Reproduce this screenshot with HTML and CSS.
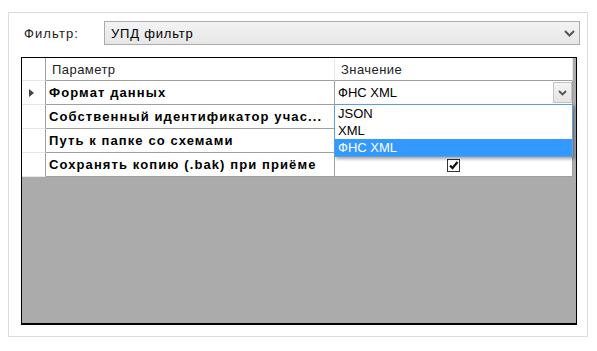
FILE: index.html
```html
<!DOCTYPE html>
<html lang="ru">
<head>
  <meta charset="UTF-8">
  <title>Фильтр</title>
  <link rel="stylesheet" href="styles.css">
</head>
<body>
  <div class="panel">
    <div class="filter-row">
      <label class="filter-label">Фильтр:</label>
      <div class="combo">
        <span>УПД фильтр</span>
        <svg class="chevron" width="11" height="7" viewBox="0 0 11 7"><path d="M1 1 L5.5 5.5 L10 1" fill="none" stroke="#555" stroke-width="2"/></svg>
      </div>
    </div>

    <div class="grid">
      <div class="table">
        <div class="rh hdr"></div>
        <div class="cell hdr">Параметр</div>
        <div class="cell hdr">Значение</div>

        <div class="rh"><span class="arrow"></span></div>
        <div class="cell name">Формат данных</div>
        <div class="cell value">
          <span class="short">ФНС XML</span>
          <div class="drop-btn">
            <svg width="9" height="6" viewBox="0 0 9 6"><path d="M1 1 L4.5 4.5 L8 1" fill="none" stroke="#555" stroke-width="1.8"/></svg>
          </div>
          <ul class="drop-list">
            <li>JSON</li>
            <li>XML</li>
            <li class="selected">ФНС XML</li>
          </ul>
        </div>

        <div class="rh"></div>
        <div class="cell name">Собственный идентификатор учас...</div>
        <div class="cell value"></div>

        <div class="rh"></div>
        <div class="cell name">Путь к папке со схемами</div>
        <div class="cell value"></div>

        <div class="rh"></div>
        <div class="cell name">Сохранять копию (.bak) при приёме</div>
        <div class="cell value check-cell">
          <span class="checkbox">
            <svg width="11" height="11" viewBox="0 0 11 11"><path d="M2 5.5 L4.5 8 L9.5 2" fill="none" stroke="#111" stroke-width="2.2"/></svg>
          </span>
        </div>
      </div>
    </div>
  </div>
</body>
</html>
```

FILE: styles.css
```css
body {
  margin: 0;
  background-color: #ffffff;
  font-family: "Liberation Sans", Arial, sans-serif;
  font-size: 13px;
  color: #000;
}

.panel {
  margin: 12px 9px 0 8px;
  width: 580px;
  height: 325px;
  box-sizing: border-box;
  border: 1px solid #dcdcdc;
  padding: 8px 7px 11px 11px;
}

.filter-row {
  display: flex;
  align-items: center;
}

.filter-label {
  width: 80px;
  margin-left: 4px;
  color: #1a1a1a;
  letter-spacing: 1.1px;
}

.combo {
  flex: 1;
  height: 24px;
  box-sizing: border-box;
  border: 1px solid #acacac;
  background: linear-gradient(#f3f3f3, #e6e6e6);
  display: flex;
  align-items: center;
  justify-content: space-between;
  padding: 0 4px 0 6px;
  letter-spacing: 0.8px;
}

.grid {
  margin-top: 12px;
  margin-left: 1px;
  width: 556px;
  height: 268px;
  box-sizing: border-box;
  border: 1px solid #000;
  border-bottom-width: 2px;
  background-color: #ababab;
}

.table {
  display: grid;
  grid-template-columns: 24px 289px 238px;
  grid-auto-rows: 24px;
  grid-template-rows: 23px;
}

.rh,
.cell {
  box-sizing: border-box;
  background-color: #fff;
  display: flex;
  align-items: center;
}

.rh {
  border-right: 1px solid #a0a0a0;
  border-bottom: 1px solid #e1e7f1;
  justify-content: center;
}

.cell {
  border-right: 1px solid #a0a0a0;
  border-bottom: 1px solid #a0a0a0;
  padding-left: 3px;
  letter-spacing: 0.45px;
  white-space: nowrap;
}

.cell.hdr {
  padding-left: 6px;
  border-right-color: #e1e7f1;
  color: #222;
  padding-top: 1px;
}

.name {
  font-weight: bold;
  letter-spacing: 1.1px;
}

.short {
  letter-spacing: 0;
}

.arrow {
  width: 0;
  height: 0;
  border-top: 4px solid transparent;
  border-bottom: 4px solid transparent;
  border-left: 5px solid #444;
  margin-left: -4px;
}

.value {
  position: relative;
}

.drop-btn {
  position: absolute;
  right: 0;
  top: 1px;
  width: 19px;
  height: 21px;
  box-sizing: border-box;
  border: 1px solid #c4c4c4;
  background: linear-gradient(#f4f4f4, #e4e4e4);
  display: flex;
  align-items: center;
  justify-content: center;
}

.drop-list {
  position: absolute;
  left: -1px;
  top: 23px;
  width: 239px;
  margin: 0;
  padding: 0;
  list-style: none;
  box-sizing: border-box;
  border: 1px solid #5d9ee2;
  background-color: #fff;
  box-shadow: 2px 2px 3px rgba(0, 0, 0, 0.35);
  z-index: 2;
}

.drop-list li {
  height: 17px;
  line-height: 17px;
  padding-left: 3px;
  letter-spacing: 0;
}

.drop-list li.selected {
  background-color: #3399ff;
  color: #fff;
}

.check-cell {
  justify-content: center;
  padding-left: 0;
}

.checkbox {
  width: 13px;
  height: 13px;
  box-sizing: border-box;
  border: 1px solid #333;
  display: flex;
  align-items: center;
  justify-content: center;
  margin-top: 2px;
}
```
